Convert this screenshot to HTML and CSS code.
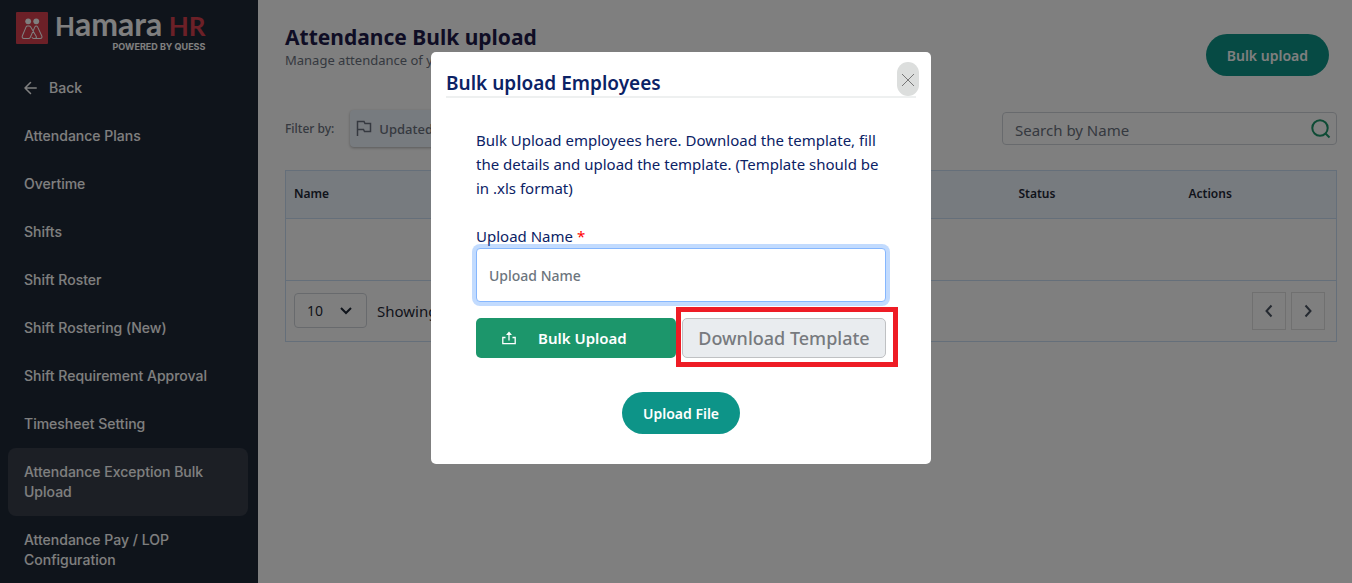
FILE: index.html
```html
<!DOCTYPE html>
<html lang="en">
<head>
<meta charset="UTF-8">
<meta name="viewport" content="width=device-width, initial-scale=1.0">
<title>Attendance Bulk upload</title>
<link rel="stylesheet" href="styles.css">
</head>
<body>
<div class="layout">
    <aside class="sidebar">
        <div class="logo">
            <svg class="logo-mark" viewBox="0 0 31 31" fill="none" stroke="#fff">
                <rect width="31" height="31" rx="1" fill="#d8404f" stroke="none"/>
                <circle cx="11.8" cy="9" r="2.8" fill="#fff" stroke="none"/>
                <circle cx="19.6" cy="9" r="2.8" fill="#fff" stroke="none"/>
                <path d="M11 13.500h1.800c.6 0 1 .3 1.300.9l5.300 8.800c.9 1.500.3 2.400-1.200 2.400h-1.200c-.8 0-1.200-.4-1.600-1.100M11 13.500c-.6 0-1 .3-1.200.9L6.200 23c-.6 1.600 0 2.600 1.500 2.600h4.300c.9 0 1.500-.4 1.900-1.200l4.400-10c.3-.6.700-.9 1.300-.9s1 .3 1.300.9l4 8.600c.7 1.600.1 2.600-1.500 2.600h-5.200"/>
            </svg>
            <div class="logo-text">
                <div class="logo-name"><span>H</span><span class="logo-small">amara</span> <span class="logo-hr">HR</span></div>
                <div class="logo-sub">POWERED BY QUESS</div>
            </div>
        </div>
        <nav class="menu">
            <a href="#" class="back">
                <svg width="13" height="14" viewBox="0 0 13 14" fill="none" stroke="#fff" stroke-width="1.500" stroke-linecap="round" stroke-linejoin="round"><path d="M12.200 7H1M6.500 1.500L1 7l5.500 5.500"/></svg>
                Back
            </a>
            <a href="#">Attendance Plans</a>
            <a href="#">Overtime</a>
            <a href="#">Shifts</a>
            <a href="#">Shift Roster</a>
            <a href="#">Shift Rostering (New)</a>
            <a href="#">Shift Requirement Approval</a>
            <a href="#">Timesheet Setting</a>
            <a href="#" class="active">Attendance Exception Bulk Upload</a>
            <a href="#">Attendance Pay / LOP Configuration</a>
        </nav>
    </aside>

    <main class="content">
        <header class="page-header">
            <div>
                <h1>Attendance Bulk upload</h1>
                <p>Manage attendance of your employees</p>
            </div>
            <button type="button" class="btn-pill">Bulk upload</button>
        </header>

        <div class="toolbar">
            <div class="filters">
                <span>Filter by:</span>
                <button type="button" class="filter">
                    <svg width="16" height="17" viewBox="0 0 16 17" fill="none" stroke="currentColor" stroke-width="1.500"><path d="M1.500 16V1.500H8l1 2h5.500v8H8.500l-1-2h-6"/></svg>
                    Updated By
                </button>
            </div>
            <div class="search">
                <input type="text" placeholder="Search by Name" aria-label="Search by Name">
                <svg width="20" height="20" viewBox="0 0 20 20" fill="none" stroke="#1c966b" stroke-width="2"><circle cx="9" cy="9" r="7.700"/><path d="M14.500 14.500l4 4"/></svg>
            </div>
        </div>

        <div class="table-box">
            <table>
                <thead>
                    <tr><th class="col-name">Name</th><th class="col-status">Status</th><th>Actions</th></tr>
                </thead>
                <tbody>
                    <tr><td colspan="3"></td></tr>
                </tbody>
            </table>
            <div class="table-footer">
                <select aria-label="Rows per page">
                    <option>10</option>
                    <option>25</option>
                    <option>50</option>
                </select>
                <span>Showing</span>
                <div class="pager">
                    <button type="button" aria-label="Previous page"><svg width="8" height="14" viewBox="0 0 8 14" fill="none" stroke="#4b5563" stroke-width="2"><path d="M6.500 1.500L1.500 7l5 5.500"/></svg></button>
                    <button type="button" aria-label="Next page"><svg width="8" height="14" viewBox="0 0 8 14" fill="none" stroke="#4b5563" stroke-width="2"><path d="M1.500 1.500l5 5.500-5 5.500"/></svg></button>
                </div>
            </div>
        </div>
    </main>
</div>

<!-- upload popup -->
<div class="backdrop">
    <div class="modal" role="dialog" aria-labelledby="modalTitle">
        <h2 id="modalTitle">Bulk upload Employees</h2>
        <button type="button" class="close" aria-label="Close">
            <svg width="12" height="12" viewBox="0 0 12 12" stroke="#777" stroke-width="1"><path d="M0 0l12 12M12 0L0 12"/></svg>
        </button>
        <form class="modal-body">
            <p>Bulk Upload employees here. Download the template, fill the details and upload the template. (Template should be in .xls format)</p>
            <label for="uploadName">Upload Name <span class="required">*</span></label>
            <input type="text" id="uploadName" class="upload-name" placeholder="Upload Name">
            <div class="actions">
                <button type="button" class="btn-bulk">
                    <svg width="14" height="14" viewBox="0 0 14 14" fill="none" stroke="#fff" stroke-width="1.300"><path d="M3.500 6.500H.8v6.200h12.400V6.500h-2.700M7 9.500V2"/><path d="M4 4l3-3.500L10 4z" fill="#fff" stroke="none"/></svg>
                    Bulk Upload
                </button>
                <div class="download">
                    <button type="button" class="btn-download">Download Template</button>
                </div>
            </div>
            <button type="button" class="btn-pill">Upload File</button>
        </form>
    </div>
</div>
</body>
</html>
```

FILE: styles.css
```css
* {
    box-sizing: border-box;
}
body {
    margin: 0;
    font-family: "Noto Sans", "Open Sans", sans-serif;
    font-size: 15px;
    line-height: 24px;
    color: #1f2937;
    background-color: #fff;
}
h1, h2, p {
    margin: 0;
}
button, input, select {
    font-family: inherit;
    font-size: 15px;
}
button {
    cursor: pointer;
}
svg {
    flex-shrink: 0;
}

/* sidebar */
.layout {
    display: flex;
    height: 100vh;
    overflow: hidden;
}
.sidebar {
    width: 258px;
    flex-shrink: 0;
    background-color: #1f2937;
}
.logo {
    display: flex;
    gap: 7px;
    height: 64px;
    padding: 12px 16px 0;
    color: #fff;
    font-family: Lato, sans-serif;
}
.logo-mark {
    width: 32px;
    height: 32px;
}
.logo-name {
    font-size: 26px;
    font-weight: 700;
    line-height: 28px;
    white-space: nowrap;
}
.logo-small {
    font-size: 32px;
    line-height: 24px;
}
.logo-hr {
    color: #d8404f;
}
.logo-sub {
    font-family: Inter, sans-serif;
    font-size: 9px;
    font-weight: 700;
    line-height: 13px;
    text-align: right;
}
.menu {
    padding: 0 10px 0 8px;
}
.menu a {
    display: block;
    padding: 14px 16px;
    border-radius: 8px;
    color: #fff;
    font-family: Inter, sans-serif;
    font-size: 14px;
    font-weight: 500;
    line-height: 20px;
    text-decoration: none;
}
.menu .back {
    display: flex;
    align-items: center;
    gap: 12px;
}
.menu .active {
    background-color: #383e4b;
}

/* page */
.content {
    flex: 1;
    padding: 22px 15px 0 27px;
}
.page-header {
    display: flex;
    justify-content: space-between;
    padding-right: 8px;
}
.page-header h1 {
    font-size: 21px;
    line-height: 30px;
    color: #1e1b4b;
}
.page-header p {
    font-size: 13px;
    line-height: 16px;
    color: #6b7280;
}
.btn-pill {
    height: 42px;
    padding: 0 21px;
    border: none;
    border-radius: 21px;
    background-color: #0d9488;
    color: #fff;
    font-size: 14px;
    font-weight: 600;
}
.page-header .btn-pill {
    margin-top: 12px;
}
.toolbar {
    display: flex;
    align-items: center;
    justify-content: space-between;
    margin: 34px 0 23px;
}
.filters {
    display: flex;
    align-items: center;
    gap: 16px;
    font-size: 12px;
    font-weight: 500;
    color: #6b7280;
}
.filter {
    display: flex;
    align-items: center;
    gap: 7px;
    height: 37px;
    padding: 0 6px;
    border: none;
    border-radius: 4px;
    background-color: #eff6ff;
    box-shadow: 0 1px 3px rgba(0, 0, 0, 0.3);
    color: #6b7280;
    font-size: 13px;
    font-weight: 500;
}
.search {
    display: flex;
    align-items: center;
    width: 335px;
    height: 33px;
    padding: 0 5px 0 12px;
    border: 1px solid #d1d5db;
    border-radius: 4px;
}
.search input {
    flex: 1;
    border: none;
    outline: none;
    padding: 2px 0 0;
    background: none;
}
.search input::placeholder {
    color: #6b7280;
}

.table-box {
    border: 1px solid #cbdff5;
}
table {
    width: 100%;
    border-collapse: collapse;
    table-layout: fixed;
}
th {
    height: 47px;
    padding: 0 8px;
    border-bottom: 1px solid #cbdff5;
    background-color: #eff6ff;
    font-size: 12px;
    font-weight: 600;
    text-align: left;
}
.col-name {
    width: 69%;
}
.col-status {
    width: 170px;
}
td {
    height: 62px;
    border-bottom: 1px solid #cbdff5;
}
.table-footer {
    display: flex;
    align-items: center;
    gap: 10px;
    height: 60px;
    padding: 0 11px 0 8px;
}
.table-footer select {
    width: 73px;
    height: 35px;
    padding: 0 12px;
    border: 1px solid #d1d5db;
    border-radius: 4px;
    color: #1f2937;
    font-size: 14px;
    appearance: none;
    background: #fff url("data:image/svg+xml,%3Csvg xmlns='http://www.w3.org/2000/svg' width='12' height='8' fill='none' stroke='%231f2937' stroke-width='2'%3E%3Cpath d='M1 1l5 5 5-5'/%3E%3C/svg%3E") no-repeat right 14px center;
}
.pager {
    display: flex;
    gap: 5px;
    margin-left: auto;
}
.pager button {
    display: flex;
    align-items: center;
    justify-content: center;
    width: 34px;
    height: 38px;
    border: 1px solid #e0e0e0;
    background: none;
}

/* popup */
.backdrop {
    position: fixed;
    inset: 0;
    display: flex;
    align-items: flex-start;
    justify-content: center;
    padding-top: 52px;
    padding-left: 10px;
    background-color: rgba(0, 0, 0, 0.5);
}
.modal {
    position: relative;
    width: 500px;
    max-width: 100%;
    border-radius: 5px;
    background-color: #fff;
    color: #0b2265;
}
.modal h2 {
    margin: 0 15px;
    padding: 18px 0 0;
    border-bottom: 2px solid #eef0f0;
    font-size: 19px;
    font-weight: 600;
    line-height: 26px;
}
.close {
    position: absolute;
    top: 10px;
    right: 12px;
    display: flex;
    align-items: center;
    justify-content: center;
    width: 22px;
    height: 34px;
    padding: 2px 0 0;
    border: none;
    border-radius: 11px;
    background-color: #dcdedd;
}
.modal-body {
    display: flex;
    flex-direction: column;
    padding: 30px 45px;
}
.modal-body label {
    margin-top: 24px;
}
.required {
    color: #f00;
}
.upload-name {
    height: 54px;
    padding: 0 12px;
    border: 1px solid #86b7fe;
    border-radius: 4px;
    outline: none;
    box-shadow: 0 0 0 4px rgba(13, 110, 253, 0.25);
    font-size: 14px;
    font-weight: 500;
}
.upload-name::placeholder {
    color: #6c757d;
}
.actions {
    display: flex;
    gap: 6px;
    margin: 16px 0 34px;
}
.btn-bulk {
    display: flex;
    align-items: center;
    gap: 22px;
    width: 200px;
    height: 40px;
    padding: 0 26px;
    border: none;
    border-radius: 5px;
    background-color: #1c966b;
    color: #fff;
    font-weight: 600;
}
.download {
    position: relative;
    flex: 1;
}
.download::after {
    content: "";
    position: absolute;
    inset: -11px -12px -9px -6px;
    border: 5px solid #ee1c25;
    pointer-events: none;
}
.btn-download {
    width: 100%;
    height: 40px;
    padding: 0;
    border: 1px solid #bfc1c3;
    border-radius: 5px;
    background-color: #e9ecef;
    color: #777a7e;
    font-size: 18px;
    font-weight: 500;
}
.modal-body .btn-pill {
    align-self: center;
}
```
